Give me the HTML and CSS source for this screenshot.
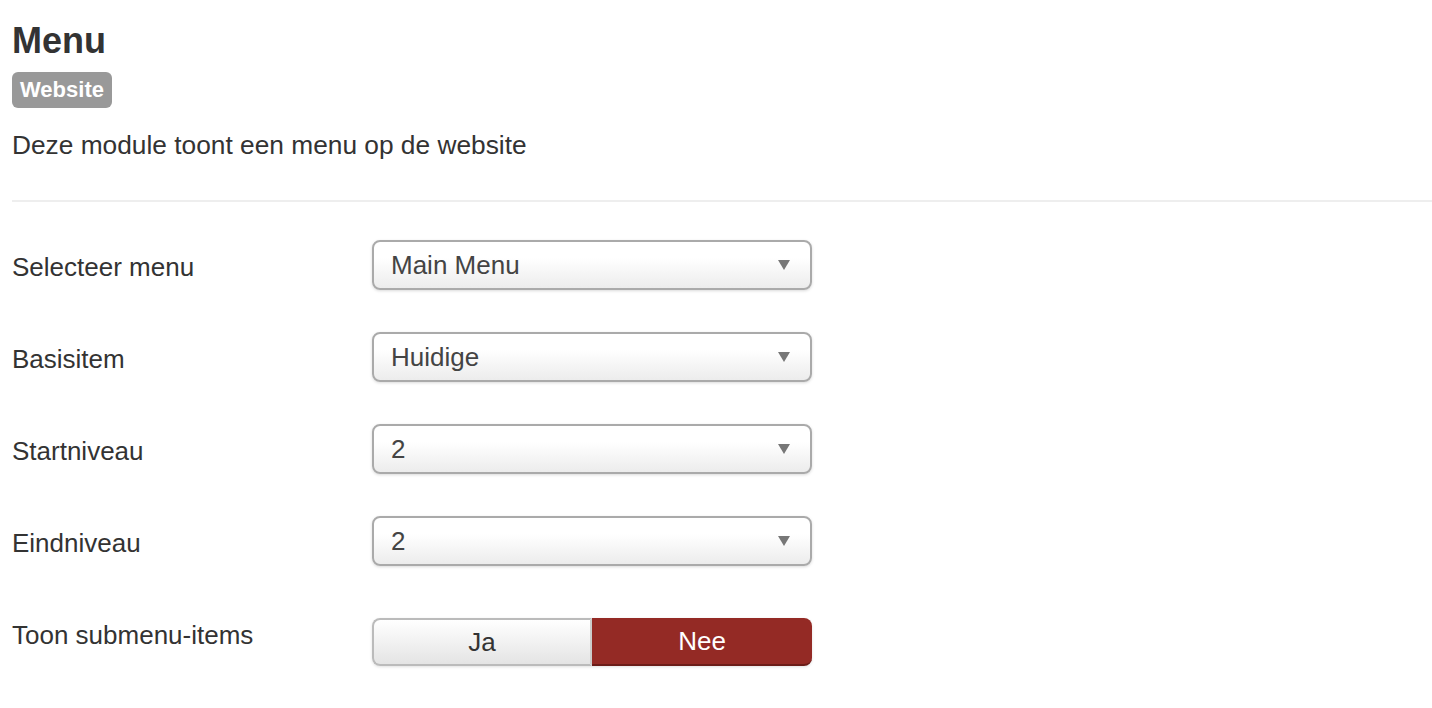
FILE: index.html
```html
<!DOCTYPE html>
<html>
<head>
<meta charset="utf-8">
<link rel="stylesheet" href="styles.css">
</head>
<body>
<div class="page">
  <h1 class="title">Menu</h1>
  <span class="badge">Website</span>
  <p class="desc">Deze module toont een menu op de website</p>
  <hr class="sep">
  <div class="form">
    <div class="row">
      <label class="label">Selecteer menu</label>
      <div class="select"><span>Main Menu</span><i class="caret"></i></div>
    </div>
    <div class="row">
      <label class="label">Basisitem</label>
      <div class="select"><span>Huidige</span><i class="caret"></i></div>
    </div>
    <div class="row">
      <label class="label">Startniveau</label>
      <div class="select"><span>2</span><i class="caret"></i></div>
    </div>
    <div class="row">
      <label class="label">Eindniveau</label>
      <div class="select"><span>2</span><i class="caret"></i></div>
    </div>
    <div class="row">
      <label class="label">Toon submenu-items</label>
      <div class="toggle">
        <span class="btn btn-ja">Ja</span>
        <span class="btn btn-nee">Nee</span>
      </div>
    </div>
  </div>
</div>
</body>
</html>
```
FILE: styles.css
```css
html, body {
  margin: 0;
  padding: 0;
  background: #fff;
}
body {
  font-family: "Liberation Sans", Arial, Helvetica, sans-serif;
  color: #333;
}
.page {
  padding: 0 0 0 12px;
}
.title {
  margin: 21px 0 0;
  font-size: 36px;
  line-height: 40px;
  font-weight: bold;
  color: #333;
}
.badge {
  display: inline-block;
  margin-top: 11px;
  height: 36px;
  line-height: 36px;
  padding: 0 8px;
  background: #999;
  color: #fff;
  font-weight: bold;
  font-size: 22px;
  border-radius: 6px;
  vertical-align: top;
}
.desc {
  margin: 19px 0 0;
  font-size: 26.3px;
  line-height: 36px;
}
.sep {
  margin: 37px 0 0;
  border: 0;
  border-top: 2px solid #eee;
  height: 0;
}
.form {
  padding-top: 38px;
}
.row {
  display: flex;
  align-items: flex-start;
  height: 50px;
  margin-bottom: 42px;
}
.label {
  width: 360px;
  flex: none;
  font-size: 26px;
  line-height: 36px;
  padding-top: 9px;
}
.select {
  box-sizing: border-box;
  width: 440px;
  height: 50px;
  border: 2px solid #aaa;
  border-radius: 8px;
  background: linear-gradient(#ffffff 0%, #ffffff 35%, #ececec 100%);
  box-shadow: 0 1px 3px rgba(0,0,0,0.15);
  display: flex;
  align-items: center;
  justify-content: space-between;
  padding: 0 20px 0 17px;
  font-size: 26px;
  color: #444;
}
.caret {
  width: 0;
  height: 0;
  border-left: 6px solid transparent;
  border-right: 6px solid transparent;
  border-top: 10px solid #777;
}
.toggle {
  display: flex;
  width: 440px;
  height: 48px;
  margin-top: 10px;
  box-shadow: 0 1px 3px rgba(0,0,0,0.12);
  border-radius: 8px;
}
.btn {
  box-sizing: border-box;
  flex: 1;
  display: flex;
  align-items: center;
  justify-content: center;
  font-size: 26px;
}
.btn-ja {
  border: 2px solid #bbb;
  border-right: 2px solid #ccc;
  border-radius: 8px 0 0 8px;
  background: linear-gradient(#ffffff, #e4e4e4);
  color: #333;
}
.btn-nee {
  border-radius: 0 8px 8px 0;
  background: #942a25;
  border-bottom: 2px solid #6b1c18;
  color: #fff;
  width: 220px;
  flex: none;
}
```
